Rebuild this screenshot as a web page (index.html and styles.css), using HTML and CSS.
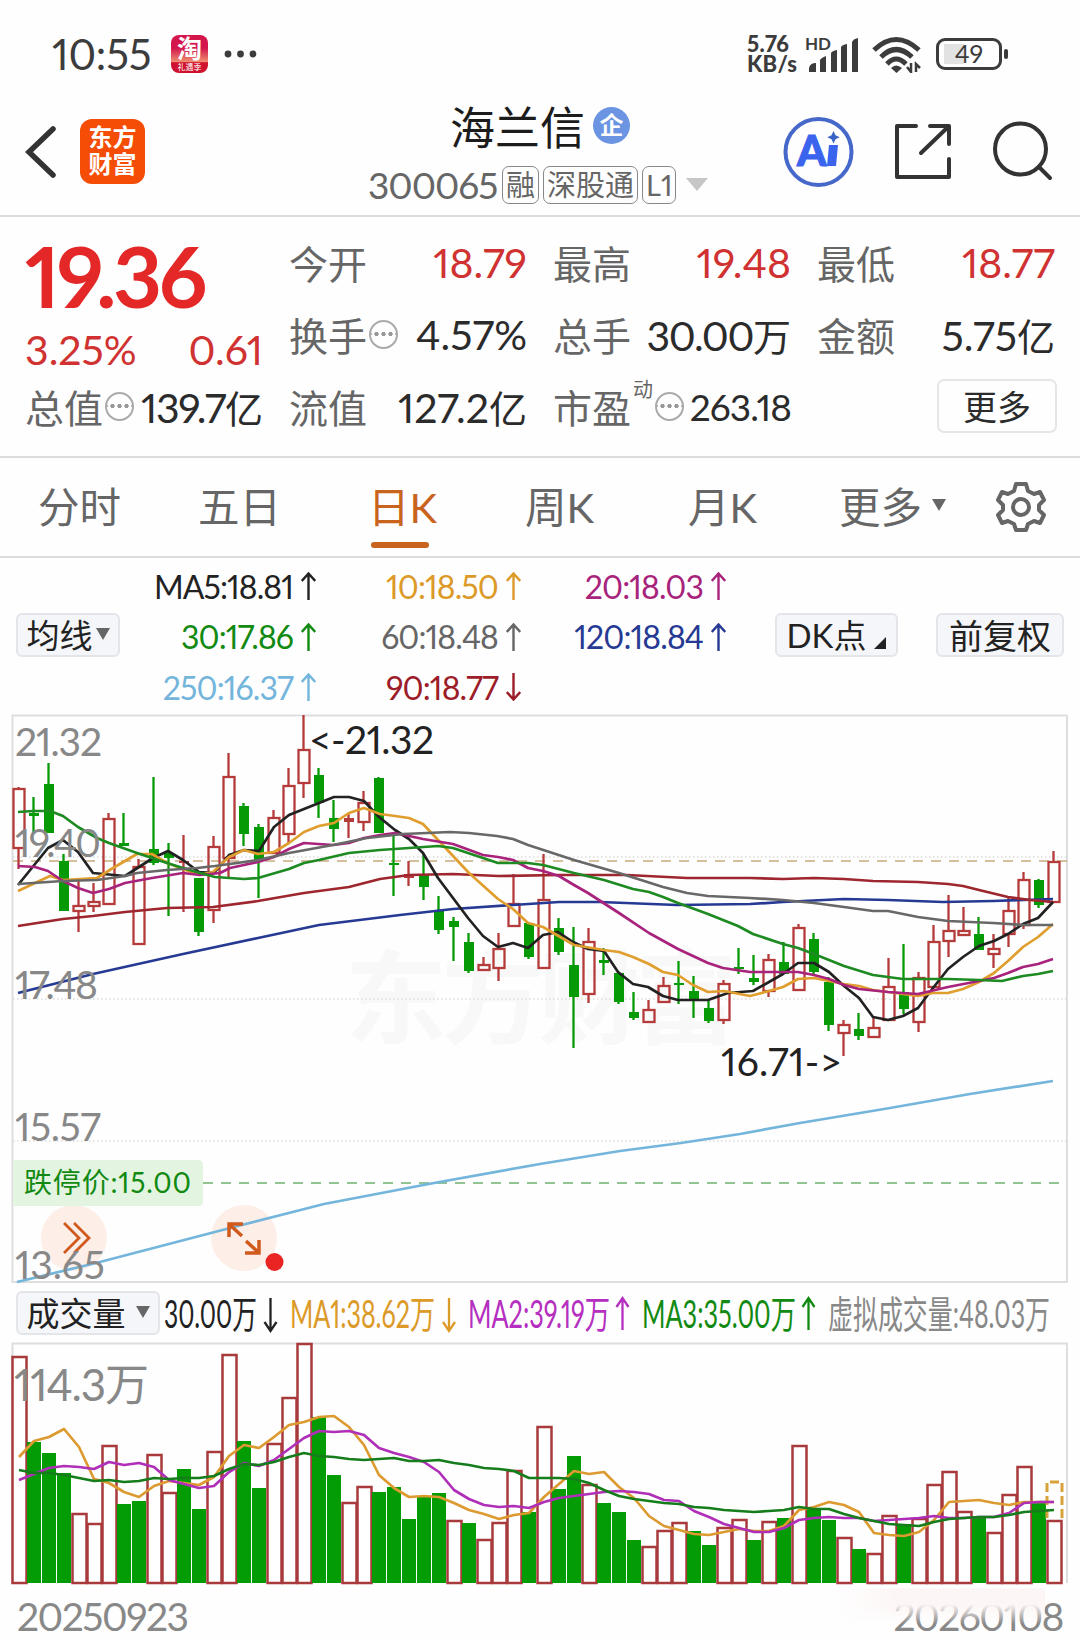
FILE: index.html
```
<!DOCTYPE html>
<html lang="zh-CN">
<head>
    <meta charset="UTF-8">
    <title>海兰信 300065</title>
    <link rel="stylesheet" href="styles.css">
</head>
<body>
    <!-- Status bar -->
    <div class="status">
        <span class="time">10:55</span>
        <span class="tao"><b>淘</b><i>礼遇季</i></span>
        <svg class="dots" width="34" height="10"><g fill="#3c3c3c"><circle cx="5" cy="5" r="3.4"/><circle cx="17.500" cy="5" r="3.4"/><circle cx="30" cy="5" r="3.4"/></g></svg>
        <div class="speed">5.76<br>KB/s</div>
        <svg class="signal" width="56" height="38" viewBox="804 36 56 38">
            <text x="805" y="51" class="hd">HD</text>
            <g fill="#3c3c3c">
                <path d="M809 73v-4q1-5 7-5v9z"/>
                <path d="M820 73V61q1-2 6-4v16z"/>
                <path d="M831 73V54q1-2 6-3v22z"/>
                <path d="M841 73V48q1-2 6-3v28z"/>
                <path d="M852 73V43q1-3 6-4v34z"/>
            </g>
        </svg>
        <svg class="wifi" width="50" height="38" viewBox="872 36 50 38">
            <g fill="none" stroke="#3c3c3c" stroke-width="5">
                <path d="M874 51Q896 30 919 51"/>
                <path d="M881 58Q896 43 912 58"/>
                <path d="M887 65Q896 55 906 65"/>
            </g>
            <path d="M891 69q5-5 11 0l-5.500 5z" fill="#3c3c3c"/>
            <path d="M911 64v9l-4-5M916 73v-8l4 4" fill="none" stroke="#3c3c3c" stroke-width="2.500"/>
        </svg>
        <div class="battery"><span>49</span></div>
    </div>

    <!-- Header -->
    <div class="header">
        <svg class="back" width="32" height="56" viewBox="25 124 32 56"><path d="M53 129L29 152L53 175" fill="none" stroke="#333" stroke-width="5.500" stroke-linecap="round"/></svg>
        <div class="logo">东方<br>财富</div>
        <div class="name">
            <div class="name-top">海兰信<span class="qi">企</span></div>
            <div class="name-sub"><span class="code">300065</span><span class="tag">融</span><span class="tag">深股通</span><span class="tag">L1</span><i class="tri-big"></i></div>
        </div>
        <svg class="tools" width="276" height="76" viewBox="780 114 276 76">
            <circle cx="818.500" cy="152" r="33" fill="none" stroke="#4568ca" stroke-width="4"/>
            <text x="797" y="166" class="ai" textLength="28">A</text>
            <path d="M829 145h9l-2 21h-9z" fill="#3a63ee"/>
            <path d="M833.500 131l2 4.200 4.200 2-4.200 2-2 4.200-2-4.200-4.200-2 4.200-2z" fill="#3a63c8"/>
            <g fill="none" stroke="#333" stroke-width="4" stroke-linecap="round" stroke-linejoin="round">
                <path d="M916 126H897V177H949V159M930 126H949V144M948 127L921 153"/>
                <circle cx="1020.500" cy="149" r="25.500"/>
                <path d="M1039 167L1050 178"/>
            </g>
        </svg>
    </div>

    <!-- Quote -->
    <div class="quote">
        <div class="price-cell">
            <div class="price">19.36</div>
            <div class="row red"><span>3.25%</span><span>0.61</span></div>
        </div>
        <div class="row"><label>今开</label><span class="red">18.79</span></div>
        <div class="row"><label>最高</label><span class="red">19.48</span></div>
        <div class="row"><label>最低</label><span class="red">18.77</span></div>
        <div class="row"><label>换手<i class="more-dot"></i></label><span>4.57%</span></div>
        <div class="row"><label>总手</label><span class="tight">30.00<b>万</b></span></div>
        <div class="row"><label>金额</label><span>5.75<b>亿</b></span></div>
        <div class="row"><label>总值<i class="more-dot"></i></label><span class="tight">139.7<b>亿</b></span></div>
        <div class="row"><label>流值</label><span>127.2<b>亿</b></span></div>
        <div class="row"><label>市盈<sup>动</sup><i class="more-dot"></i></label><span class="small">263.18</span></div>
        <div class="row end"><button class="more">更多</button></div>
    </div>

    <!-- Period tabs -->
    <div class="tabs">
        <span>分时</span>
        <span>五日</span>
        <span class="active">日K</span>
        <span>周K</span>
        <span>月K</span>
        <span>更多<i class="tri"></i></span>
        <svg width="52" height="54" viewBox="-26 -27 52 54" fill="none" stroke="#666" stroke-width="4" stroke-linejoin="round">
            <path d="M-5-23H5L7-16L13-13L19-15L23-7L18-2V3L23 8L19 16L13 14L7 17L5 23H-5L-7 17L-13 14L-19 16L-23 8L-18 3V-2L-23-7L-19-15L-13-13L-7-16Z"/>
            <circle r="8"/>
        </svg>
    </div>

    <!-- MA legend -->
    <div class="legend">
        <div class="btn">均线<i class="tri"></i></div>
        <div class="ma">
            <span class="c5">MA5:18.81<svg class="arr"><use href="#up"/></svg></span>
            <span class="c10">10:18.50<svg class="arr"><use href="#up"/></svg></span>
            <span class="c20">20:18.03<svg class="arr"><use href="#up"/></svg></span>
            <span class="c30">30:17.86<svg class="arr"><use href="#up"/></svg></span>
            <span class="c60">60:18.48<svg class="arr"><use href="#up"/></svg></span>
            <span class="c120">120:18.84<svg class="arr"><use href="#up"/></svg></span>
            <span class="c250">250:16.37<svg class="arr"><use href="#up"/></svg></span>
            <span class="c90">90:18.77<svg class="arr"><use href="#down"/></svg></span>
        </div>
        <div class="btn dk">DK点<i class="corner"></i></div>
        <div class="btn fq">前复权</div>
    </div>

    <svg width="0" height="0" class="defs">
        <symbol id="up" viewBox="0 0 15 28" overflow="visible"><path d="M7.500 28V1.500M.8 9L7.500 1.500L14.200 9" fill="none" stroke="currentColor" stroke-width="2.400"/></symbol>
        <symbol id="down" viewBox="0 0 15 28" overflow="visible"><path d="M7.500 0V26.500M.8 19L7.500 26.500L14.200 19" fill="none" stroke="currentColor" stroke-width="2.400"/></symbol>
    </svg>

    <!-- Candles -->
    <svg class="chart" width="1080" height="572" viewBox="0 712 1080 572">
        <text x="345" y="1036" class="watermark" textLength="392">东方财富</text>
        <g stroke="#dcdcdc" stroke-width="1.500" stroke-dasharray="1.500 2.500">
            <path d="M13 857H1067M13 999H1067M13 1141H1067"/>
        </g>
        <path d="M12.500 1282V715.500H1067V1282Z" fill="none" stroke="#dedede" stroke-width="2"/>
        <path d="M13 861H1067" stroke="#c9ab80" stroke-width="1.500" stroke-dasharray="10 8"/>
        <path d="M203 1183H1067" stroke="#6fb070" stroke-width="1.700" stroke-dasharray="10 8"/>
        <circle cx="74" cy="1238" r="33" fill="#fdeee7"/>
        <circle cx="244" cy="1238" r="33" fill="#fdeee7"/>
        <g id="candles"></g>
        <g id="lines"></g>
        <path d="M13 1160H198q5 0 5 5v36q0 5-5 5H13z" fill="#e3f4e1"/>
        <text x="24" y="1193" class="limit" textLength="167">跌停价:15.00</text>
        <g fill="none" stroke="#cf5a1c" stroke-width="2.800">
            <path d="M64 1223L79 1238L64 1253M74 1223L89 1238L74 1253"/>
            <path d="M229 1237V1224H243M230 1225L242 1236M246 1241L258 1252M259 1240V1253H245" stroke-width="3.500"/>
        </g>
        <circle cx="274.500" cy="1262" r="9" fill="#ea2323"/>
        <g class="scale">
            <text x="15" y="756" textLength="87">21.32</text>
            <text x="15" y="857" textLength="86">19.40</text>
            <text x="15" y="999" textLength="83">17.48</text>
            <text x="15" y="1141" textLength="86">15.57</text>
            <text x="15" y="1279" textLength="90">13.65</text>
        </g>
        <g class="peak">
            <text x="309" y="754" textLength="125">&lt;-21.32</text>
            <text x="721" y="1076" textLength="121">16.71-&gt;</text>
        </g>
    </svg>

    <!-- Volume -->
    <div class="vol-head">
        <div class="btn">成交量<i class="tri"></i></div>
        <svg width="916" height="52" viewBox="163 1287 916 52">
            <text x="164" y="1328" textLength="93" lengthAdjust="spacingAndGlyphs" fill="#222">30.00万</text>
            <text x="290" y="1328" textLength="145" lengthAdjust="spacingAndGlyphs" fill="#dc9a28">MA1:38.62万</text>
            <text x="468" y="1328" textLength="142" lengthAdjust="spacingAndGlyphs" fill="#b52fc0">MA2:39.19万</text>
            <text x="642" y="1328" textLength="154" lengthAdjust="spacingAndGlyphs" fill="#128a12">MA3:35.00万</text>
            <text x="828" y="1328" textLength="222" lengthAdjust="spacingAndGlyphs" fill="#888">虚拟成交量:48.03万</text>
            <g fill="none" stroke-width="2.300">
                <path d="M270.500 1298V1331M264.500 1322L270.500 1331L276.500 1322" stroke="#222"/>
                <path d="M449 1298V1331M443 1322L449 1331L455 1322" stroke="#dc9a28"/>
                <path d="M622.500 1330V1298M616.500 1307L622.500 1298L628.500 1307" stroke="#b52fc0"/>
                <path d="M808.500 1330V1298M802.500 1307L808.500 1298L814.500 1307" stroke="#128a12"/>
            </g>
        </svg>
    </div>
    <svg class="chart" width="1080" height="244" viewBox="0 1341 1080 244">
        <path d="M12.500 1583V1343.500H1067V1583" fill="none" stroke="#dedede" stroke-width="2"/>
        <g id="bars"></g>
        <g id="vlines"></g>
        <text x="14" y="1401" class="vmax" textLength="135">114.3万</text>
    </svg>
    <div class="dates"><span>20250923</span><span class="last">20260108</span></div>

    <script src="chart.js"></script>
</body>
</html>
```
FILE: styles.css
```
body {
    margin: 0;
    width: 1080px;
    height: 1642px;
    overflow: hidden;
    background: #fefefe;
    color: #2b2b2b;
    font-family: Lato, "Noto Sans CJK SC", sans-serif;
    font-variant-numeric: proportional-nums;
}
i, b {
    font-style: normal;
    font-weight: normal;
}
/* Status bar */
.status {
    display: flex;
    align-items: center;
    height: 72px;
    padding: 18px 78px 0 52px;
    color: #3c3c3c;
}
.time {
    width: 119px;
    font-size: 42px;
    letter-spacing: -.2px;
}
.tao {
    display: flex;
    flex-direction: column;
    align-items: center;
    width: 37px;
    height: 38px;
    border-radius: 8px;
    background: linear-gradient(#d3174d 0 35%, #ee8c70 70%, #cf1230 73%);
    color: #fff;
}
.tao b {
    font-size: 25px;
    font-weight: bold;
    line-height: 27px;
}
.tao i {
    font-size: 8px;
    line-height: 10px;
}
.dots {
    margin-left: 15px;
}
.speed {
    margin-left: auto;
    width: 57px;
    font-size: 22px;
    font-weight: 900;
    line-height: 20px;
    letter-spacing: .3px;
}
.signal {
    overflow: visible;
}
.hd {
    font-size: 17px;
    font-weight: bold;
    fill: #3c3c3c;
}
.wifi {
    margin: 0 14px 0 12px;
}
.battery {
    position: relative;
    width: 60px;
    height: 26px;
    border: 3px solid #3c3c3c;
    border-radius: 9px;
    background: linear-gradient(#e2e2e2, #e2e2e2) 5px 3px / 20px 20px no-repeat;
    font-size: 25px;
    line-height: 25px;
    text-align: center;
}
.battery:after {
    content: "";
    position: absolute;
    right: -9px;
    top: 8px;
    width: 4px;
    height: 10px;
    border-radius: 2px;
    background: #3c3c3c;
}
/* Header */
.header {
    display: flex;
    align-items: center;
    box-sizing: border-box;
    height: 127px;
    padding: 0 24px 2px 25px;
    border-bottom: 2px solid #dcdcdc;
}
.logo {
    margin-left: 23px;
    width: 65px;
    height: 61px;
    padding-top: 4px;
    border-radius: 12px;
    background: #f54c06;
    color: #fff;
    font-size: 24px;
    font-weight: bold;
    line-height: 27px;
    text-align: center;
}
.name {
    width: 400px;
    margin-left: 198px;
}
.name-top {
    display: flex;
    align-items: center;
    height: 59px;
    padding-left: 107px;
    font-size: 45px;
    color: #1c1c1c;
}
.qi {
    width: 37px;
    height: 37px;
    margin-left: 8px;
    border-radius: 50%;
    background: #6b95e2;
    color: #fff;
    font-size: 24px;
    font-weight: bold;
    line-height: 35px;
    text-align: center;
}
.name-sub {
    display: flex;
    align-items: center;
    height: 45px;
    padding: 7px 0 0 25px;
    color: #666;
}
.code {
    width: 134px;
    font-size: 37px;
    letter-spacing: -1px;
}
.tag {
    margin-right: 4px;
    padding: 0 3px;
    border: 1.5px solid #888;
    border-radius: 7px;
    font-size: 29px;
    line-height: 36px;
}
.tri-big {
    margin-left: 6px;
    border: 11px solid transparent;
    border-top: 13px solid #c6c6c6;
    border-bottom: 0;
}
.tools {
    margin-left: auto;
}
.ai {
    font-size: 42px;
    font-weight: 900;
    fill: #3a63ee;
    stroke: #3a63ee;
    stroke-width: 1;
}
/* Quote */
.quote {
    display: grid;
    grid-template-columns: repeat(4, 238px);
    grid-template-rows: 72px 72px 72px;
    column-gap: 26px;
    box-sizing: border-box;
    height: 241px;
    padding: 10px 25px 0;
    border-bottom: 2px solid #dcdcdc;
}
.price-cell {
    grid-row: span 2;
}
.price {
    height: 87px;
    color: #e42828;
    font-size: 85px;
    font-weight: bold;
    line-height: 97px;
    letter-spacing: -3.3px;
}
.row {
    display: flex;
    align-items: center;
    justify-content: space-between;
    height: 70px;
    font-size: 41px;
    white-space: nowrap;
}
.row span {
    padding-top: 1px;
}
.row b {
    font-size: 38px;
    letter-spacing: 0;
}
.row label {
    display: flex;
    align-items: center;
    color: #666;
    font-size: 39px;
}
.red {
    color: #d03232;
}
.row .small {
    font-size: 37px;
    letter-spacing: -.9px;
}
.tight {
    letter-spacing: -1.4px;
}
.row sup {
    align-self: flex-start;
    margin: -1px 0 0 2px;
    font-size: 20px;
    line-height: 24px;
}
.more-dot {
    box-sizing: border-box;
    width: 29px;
    height: 29px;
    margin-left: 2px;
    border: 2.5px solid #aaa;
    border-radius: 50%;
    background: radial-gradient(circle, #999 1.9px, transparent 2.4px) 2px 0 / 7px 24px;
}
.end {
    justify-content: flex-end;
}
.more {
    width: 120px;
    height: 54px;
    margin-right: -2px;
    padding: 0 0 3px;
    border: 2px solid #e6e6e6;
    border-radius: 7px;
    background: #fefefe;
    color: #2b2b2b;
    font: 34px Lato, "Noto Sans CJK SC", sans-serif;
}
/* Tabs */
.tabs {
    display: grid;
    grid-template-columns: 160px 170px 157px 163px 151px 156px 52px;
    align-items: center;
    box-sizing: border-box;
    height: 100px;
    padding-left: 38px;
    border-bottom: 2px solid #dcdcdc;
    color: #666;
    font-size: 41.5px;
}
.tabs span {
    display: flex;
    align-items: center;
    box-sizing: border-box;
    height: 98px;
    padding-bottom: 5px;
}
.tabs .active {
    position: relative;
    color: #c8641e;
}
.active:after {
    content: "";
    position: absolute;
    left: 3px;
    bottom: 8px;
    width: 58px;
    height: 6px;
    border-radius: 3px;
    background: #c8641e;
}
.tri {
    display: inline-block;
    margin-left: 10px;
    border: 7px solid transparent;
    border-top: 12px solid #666;
    border-bottom: 0;
}
/* MA legend */
.legend {
    display: flex;
    align-items: center;
    height: 154px;
    padding: 0 16px;
}
.btn {
    display: flex;
    align-items: center;
    justify-content: center;
    box-sizing: border-box;
    width: 104px;
    height: 44px;
    padding-bottom: 2px;
    border: 2px solid #e3e5e8;
    border-radius: 6px;
    background: #f5f6f9;
    color: #222;
    font-size: 33px;
    white-space: nowrap;
}
.legend .tri {
    margin-left: 3px;
}
.ma {
    display: grid;
    grid-template-columns: 196px 205px 205px;
    grid-template-rows: 50.500px 50.500px 50.500px;
    margin-top: 3px;
}
.ma span {
    display: flex;
    align-items: center;
    justify-content: flex-end;
    font-size: 32px;
    letter-spacing: -.9px;
}
.arr {
    width: 15px;
    height: 28px;
    margin-left: 8px;
}
.c5 { color: #222; }
.c10 { color: #dc9a28; }
.c20 { color: #a8237c; }
.c30 { color: #128a12; }
.c60 { color: #666; }
.c120 { color: #263a94; }
.c250 { color: #74b5dc; }
.c90 { color: #9c1c28; }
.dk {
    width: 123px;
    margin-left: 49px;
}
.fq {
    width: 128px;
    margin-left: auto;
    font-size: 34px;
}
.corner {
    margin: 18px 0 0 8px;
    border-left: 12px solid transparent;
    border-bottom: 12px solid #222;
}
.defs {
    position: absolute;
}
/* Charts */
.chart {
    display: block;
    overflow: visible;
}
.watermark {
    font-size: 102px;
    font-weight: bold;
    fill: #f8f8f9;
}
.limit {
    font-size: 28px;
    fill: #128a12;
}
.scale {
    font-size: 39px;
    fill: #888;
}
.peak {
    font-size: 39px;
    fill: #222;
}
.vmax {
    font-size: 44px;
    fill: #888;
}
.vol-head {
    display: flex;
    align-items: center;
    height: 57px;
    padding-left: 16px;
}
.vol-head .btn {
    width: 144px;
    margin-right: 3px;
}
.vol-head svg text {
    font-size: 38px;
}
.dates {
    display: flex;
    justify-content: space-between;
    padding: 7px 17px 0 17px;
    height: 49px;
    color: #888;
    font-size: 39px;
    line-height: 48px;
    letter-spacing: -1.5px;
}
.last {
    position: relative;
}
/* fades out the top of the right-hand date */
.last:after {
    content: "";
    position: absolute;
    left: -60px;
    right: 18px;
    top: -4px;
    height: 36px;
    background: linear-gradient(90deg, #fefefe, transparent 30%), linear-gradient(#fdf6f6 45%, rgba(254,254,254,0));
}
```
FILE: chart.js
```
// one row per day: colour, high, body top, body bottom, low, volume top
const days = [
    ["r",787,788,848,869,1356],["g",797,813,816,833,1442],["g",763,784,833,833,1453],["g",854,861,911,911,1473],["r",881,905,911,932,1513],
    ["r",883,901,906,912,1523],["r",813,818,904,904,1445],["g",813,843,846,846,1504],["r",859,866,944,944,1501],["g",777,849,863,865,1454],
    ["g",843,853,858,916,1492],["r",835,861,863,912,1469],["g",878,878,932,936,1509],["r",836,846,910,923,1451],["r",753,776,858,877,1354],
    ["g",803,806,834,846,1441],["g",824,827,860,898,1488],["r",810,817,853,854,1443],["r",768,785,834,843,1397],["r",715,749,783,798,1343],
    ["g",768,775,803,818,1417],["g",800,818,829,842,1475],["r",813,818,822,838,1502],["r",791,802,822,831,1486],["g",777,778,833,833,1492],
    ["g",833,863,865,896,1487],["r",861,874,878,886,1519],["g",854,875,887,900,1497],["g",896,910,930,934,1493],["g",917,921,927,961,1520],
    ["g",933,942,971,973,1523],["r",957,964,970,970,1539],["r",933,948,968,981,1522],["r",874,903,926,926,1470],["g",923,923,957,959,1512],
    ["r",854,899,968,968,1426],["g",918,928,952,955,1489],["g",927,965,997,1048,1456],["r",928,941,994,1003,1484],["g",948,960,963,975,1503],
    ["g",973,973,1002,1004,1512],["g",992,1012,1018,1020,1540],["r",1000,1009,1022,1022,1546],["r",977,985,1002,1002,1530],["g",961,983,985,1004,1522],
    ["g",976,991,1000,1018,1531],["g",1000,1008,1021,1023,1545],["r",980,983,1020,1024,1527],["g",948,967,969,974,1519],["g",955,978,982,985,1540],
    ["r",954,959,991,997,1521],["g",942,962,974,974,1518],["r",924,927,990,990,1445],["g",933,939,972,975,1508],["g",977,982,1025,1031,1520],
    ["r",1020,1024,1033,1056,1537],["g",1013,1029,1036,1040,1549],["r",1017,1027,1037,1037,1553],["r",958,986,1020,1020,1515],["g",944,992,1009,1014,1524],
    ["r",972,977,1022,1032,1518],["r",925,941,987,987,1484],["r",895,930,941,957,1471],["r",907,930,935,936,1511],["g",917,934,950,950,1516],
    ["r",934,948,954,968,1532],["r",897,910,934,947,1494],["r",872,879,925,929,1466],["g",879,880,905,908,1503],["r",851,861,902,902,1520]
];
// volume colours differ from candle colours on a few days
const volColours = "rgggrrrggrrggrrggrrrggrrgggggrgrrrgrggrggg" + "rrrggrrgrgrggrgrrgrrrrgrrrgr";

const RED = "#b53a3a", GREEN = "#069a06";
const x = i => 19 + i * 15;
let candles = "", bars = "";

days.forEach(([c, hi, top, bot, lo, vol], i) => {
    const cx = x(i), col = c === "r" ? RED : GREEN;
    if (c === "g" || bot - top < 5) {
        candles += `<path d="M${cx - .5} ${hi}V${lo}" stroke="${col}" stroke-width="2.300"/>`;
        candles += `<rect x="${cx - 5}" y="${top}" width="10" height="${bot - top}" fill="${col}"/>`;
    } else {
        candles += `<path d="M${cx - .5} ${hi}V${top}M${cx - .5} ${bot}V${lo}" stroke="${col}" stroke-width="2.300"/>`;
        candles += `<rect x="${cx - 5.5}" y="${top + 1}" width="11" height="${bot - top - 1}" fill="none" stroke="${col}" stroke-width="2.300"/>`;
    }
    if (volColours[i] === "r") {
        bars += `<rect x="${cx - 6.5}" y="${vol + 1}" width="14" height="${1582 - vol}" fill="#fff" stroke="#a83a3c" stroke-width="2.500"/>`;
    } else {
        bars += `<rect x="${cx - 7}" y="${vol}" width="14" height="${1583 - vol}" fill="#049c04"/>`;
    }
});
// projected volume of the current day
bars += `<path d="M1047 1518V1482H1062V1518" fill="none" stroke="#d8a23a" stroke-width="3" stroke-dasharray="9 4"/>`;

const ma = {
    "#74b5dc": "17,1282 96,1263 234,1227 324,1204 434,1183 540,1164 620,1151 681,1143 740,1134 800,1123 890,1108 970,1094 1053,1081",
    "#263a94": "18,993 93,974 183,954 258,938 319,925 400,915 453,909 513,905 559,902 600,902 677,905 750,904 783,902 844,899 888,900 943,902 993,901 1023,900 1053,899",
    "#9e262e": "18,926 63,919 93,916 125,912 167,908 213,907 258,901 304,893 349,887 380,879 409,875 453,874 498,876 559,875 627,875 687,878 750,878 783,879 814,878 844,879 873,881 918,882 948,884 963,886 979,890 1008,897 1030,900 1053,902",
    "#222": "18,885 48,848 63,840 78,852 93,873 125,876 153,858 168,851 183,860 199,872 214,873 229,855 244,850 259,851 274,827 289,815 304,809 319,803 334,797 349,797 364,801 379,817 395,830 409,839 423,853 438,878 468,918 483,936 498,947 513,943 528,948 543,935 558,932 573,942 588,949 604,951 618,972 633,984 648,987 663,996 678,1000 708,1000 728,993 753,991 769,982 783,974 798,963 814,963 829,972 844,986 859,998 873,1017 888,1020 903,1016 918,1008 933,988 948,969 963,957 979,946 994,941 1008,934 1023,924 1038,918 1053,902",
    "#e09e2e": "18,891 50,876 63,880 97,878 113,868 137,854 152,854 167,863 199,875 213,872 229,857 244,850 258,854 274,852 289,843 304,832 319,826 334,823 349,813 364,808 380,814 395,816 409,818 423,824 439,841 469,873 498,899 513,909 528,923 543,927 574,945 604,950 619,952 633,957 649,964 663,972 678,975 693,985 708,992 724,991 750,996 769,991 783,987 798,979 814,978 829,981 844,984 859,986 873,990 903,994 918,996 933,993 948,993 963,989 979,982 994,973 1008,961 1023,947 1038,937 1053,924",
    "#a8237c": "18,866 35,867 48,871 63,881 78,888 93,893 109,889 125,883 152,878 183,873 200,875 220,873 230,868 258,862 274,857 289,849 304,843 333,845 349,843 364,838 380,835 395,833 409,836 423,839 453,844 483,855 498,857 513,860 528,868 543,871 559,876 574,885 588,893 619,913 649,933 678,949 708,963 723,968 750,972 783,972 798,972 814,975 829,979 844,985 859,989 888,992 918,994 948,987 979,981 994,978 1008,973 1023,967 1038,964 1053,959",
    "#1d8a22": "18,812 33,811 50,811 63,816 78,827 97,838 109,843 137,853 167,863 183,868 200,873 215,877 244,879 258,878 289,869 304,863 319,860 349,853 380,850 438,846 453,848 483,858 498,863 528,863 543,865 574,873 604,880 633,889 649,892 663,897 678,903 708,914 738,926 753,934 783,944 798,948 814,954 844,966 873,975 903,979 948,979 979,980 1002,981 1023,976 1038,974 1053,971",
    "#686868": "18,884 63,881 97,880 125,876 137,873 167,870 197,868 215,866 258,860 289,853 333,845 367,838 403,834 450,832 469,833 497,836 513,839 528,845 574,860 619,873 663,887 687,893 708,896 750,898 783,900 814,903 844,907 873,911 888,911 918,917 948,921 993,923 1023,925 1053,925"
};
const volMa = {
    "#dc9a30": [1457,1441,1437,1429,1447,1479,1483,1492,1497,1486,1481,1483,1485,1477,1456,1445,1448,1437,1425,1422,1417,1416,1427,1445,1475,1488,1497,1496,1497,1503,1510,1514,1519,1515,1513,1497,1484,1471,1474,1472,1487,1498,1516,1526,1530,1534,1535,1532,1529,1531,1531,1526,1510,1507,1502,1505,1512,1533,1535,1536,1532,1520,1502,1501,1500,1503,1505,1502,1502,1502],
    "#b02fb8": [1480,1474,1468,1466,1467,1469,1462,1465,1463,1467,1480,1484,1488,1486,1472,1463,1466,1460,1449,1438,1431,1432,1431,1435,1448,1453,1457,1462,1472,1490,1499,1505,1507,1506,1508,1502,1498,1496,1494,1492,1491,1492,1494,1500,1501,1511,1517,1524,1528,1532,1532,1528,1520,1518,1517,1518,1518,1521,1520,1519,1518,1516,1518,1518,1517,1517,1513,1503,1502,1502],
    "#157d1b": [1470,1473,1473,1475,1478,1481,1480,1482,1481,1478,1479,1478,1478,1476,1469,1464,1465,1462,1457,1453,1456,1457,1459,1460,1459,1458,1461,1461,1460,1463,1465,1468,1469,1471,1478,1478,1478,1479,1483,1490,1496,1499,1501,1503,1504,1507,1508,1510,1511,1512,1511,1510,1507,1509,1509,1514,1518,1521,1524,1525,1526,1522,1519,1518,1517,1517,1515,1512,1511,1510]
};
const line = (pts, col) => `<polyline points="${pts}" fill="none" stroke="${col}" stroke-width="2.700" stroke-linejoin="round"/>`;

document.getElementById("candles").innerHTML = candles;
document.getElementById("bars").innerHTML = bars;
document.getElementById("lines").innerHTML = Object.entries(ma).map(([col, pts]) => line(pts, col)).join("");
document.getElementById("vlines").innerHTML = Object.entries(volMa).map(([col, ys]) => line(ys.map((y, i) => x(i) + "," + y).join(" "), col)).join("");
```
